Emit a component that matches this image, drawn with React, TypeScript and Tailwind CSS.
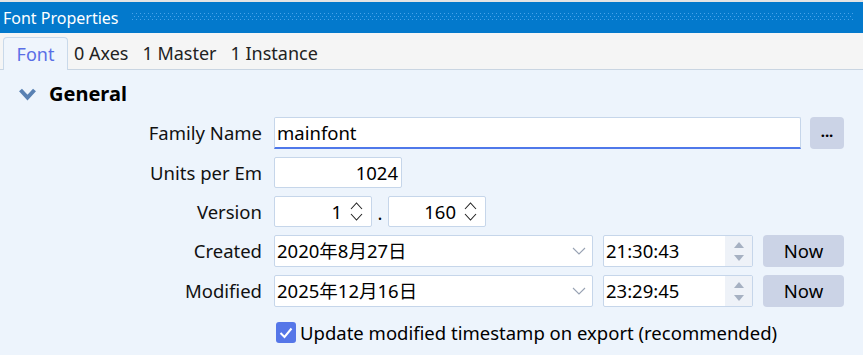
import React from "react";

const FONT = '"Noto Sans", "Noto Sans CJK SC", sans-serif';

function Dots() {
  return (
    <svg className="h-[9px] flex-1" preserveAspectRatio="none">
      <defs>
        <pattern id="dp" width="4" height="6" patternUnits="userSpaceOnUse">
          <rect x="0" y="0" width="1" height="1" fill="#4aa3ea" />
          <rect x="2" y="3" width="1" height="1" fill="#4aa3ea" />
        </pattern>
      </defs>
      <rect x="0" y="0" width="100%" height="8" fill="url(#dp)" />
    </svg>
  );
}

function UpDown() {
  return (
    <svg width="13" height="21" viewBox="0 0 13 21" className="shrink-0">
      <path d="M1 8 L6.5 2 L12 8" fill="none" stroke="#222" strokeWidth="1.1" />
      <path d="M1 13 L6.5 19 L12 13" fill="none" stroke="#222" strokeWidth="1.1" />
    </svg>
  );
}

function Label({ children }: { children: React.ReactNode }) {
  return (
    <div className="flex h-[31px] items-center justify-end text-[18.5px] text-[#111]">
      {children}
    </div>
  );
}

function DateRow({ date, time }: { date: string; time: string }) {
  return (
    <div className="flex h-[32px] items-stretch gap-[10px]">
      <div className="flex w-[319px] items-center justify-between rounded-[2px] border border-[#c6d6ea] bg-white pl-[2px] pr-[6px] text-[18.5px] text-black">
        <span>{date}</span>
        <svg width="14" height="8" viewBox="0 0 14 8">
          <path d="M1 1 L7 7 L13 1" fill="none" stroke="#98a2b3" strokeWidth="1.1" />
        </svg>
      </div>
      <div className="flex w-[150px] items-stretch rounded-[2px] border border-[#c6d6ea] bg-white text-[18.5px] text-black">
        <div className="flex flex-1 items-center pl-[2px]">{time}</div>
        <div className="flex w-[27px] flex-col items-center justify-center gap-[7px] bg-[#eef2f8]">
          <svg width="10" height="6" viewBox="0 0 10 6">
            <path d="M0 6 L5 0 L10 6 Z" fill="#a6b1c2" />
          </svg>
          <svg width="10" height="6" viewBox="0 0 10 6">
            <path d="M0 0 L5 6 L10 0 Z" fill="#a6b1c2" />
          </svg>
        </div>
      </div>
      <div className="flex w-[81px] items-center justify-center rounded-[4px] bg-[#cbd3e6] text-[18.5px] text-black">
        Now
      </div>
    </div>
  );
}

export default function App() {
  return (
    <div
      className="flex h-[355px] w-[863px] flex-col overflow-hidden bg-[#edf4fc]"
      style={{ fontFamily: FONT }}
    >
      <div className="h-[2px] bg-[#e4e4e4]" />
      <div className="flex h-[31px] items-center gap-[13px] bg-[#0379cc] pl-[3px] pr-[10px]">
        <span className="text-[16px] leading-none text-white">Font Properties</span>
        <Dots />
      </div>
      <div className="flex h-[37px] items-end border-b border-[#c9d5e2] bg-[#f5f5f5] pl-[3px]">
        <div className="-mb-px flex h-[33px] w-[65px] items-center justify-center rounded-t-[4px] border border-b-0 border-[#c9d9ea] bg-[#eff5fc] text-[18px] text-[#5a6fe6]">
          Font
        </div>
        <div className="flex h-[32px] items-center gap-[14px] pl-[6px] text-[18px] text-[#222]">
          <span>0 Axes</span>
          <span>1 Master</span>
          <span>1 Instance</span>
        </div>
      </div>
      <div className="flex flex-1 flex-col pr-[19px]">
        <div className="flex h-[47px] items-center gap-[13px] pl-[19px] pt-[1px]">
          <svg width="17" height="13" viewBox="0 0 17 13">
            <path d="M1.5 2 L8.5 9.5 L15.5 2" fill="none" stroke="#5981b3" strokeWidth="4" />
          </svg>
          <span className="text-[20px] font-bold text-black">General</span>
        </div>
        <div className="grid grid-cols-[262px_1fr] gap-x-[12px] gap-y-[8px]">
          <Label>Family Name</Label>
          <div className="flex h-[32px] items-stretch gap-[9px]">
            <div className="flex flex-1 items-center rounded-t-[2px] border border-b-2 border-[#c6d6ea] border-b-[#4f78ea] bg-white pl-[2px] text-[18.5px] text-black">
              mainfont
            </div>
            <div className="flex w-[34px] items-center justify-center rounded-[4px] bg-[#cbd3e6] pb-[4px] text-[15px] font-bold text-black">
              ...
            </div>
          </div>
          <Label>Units per Em</Label>
          <div className="flex h-[31px]">
            <div className="flex w-[128px] items-center justify-end rounded-[2px] border border-[#c6d6ea] bg-white pr-[3px] text-[18.5px] text-black">
              1024
            </div>
          </div>
          <Label>Version</Label>
          <div className="flex h-[31px] items-stretch">
            <div className="flex w-[98px] items-center justify-end gap-[8px] rounded-[2px] border border-[#c6d6ea] bg-white pr-[8px] text-[18.5px] text-black">
              <span>1</span>
              <UpDown />
            </div>
            <div className="flex w-[16px] items-end justify-center pb-[5px] text-[18.5px] leading-none">.</div>
            <div className="flex w-[98px] items-center justify-end gap-[8px] rounded-[2px] border border-[#c6d6ea] bg-white pr-[8px] text-[18.5px] text-black">
              <span>160</span>
              <UpDown />
            </div>
          </div>
          <Label>Created</Label>
          <DateRow date="2020年8月27日" time="21:30:43" />
          <Label>Modified</Label>
          <DateRow date="2025年12月16日" time="23:29:45" />
          <div />
          <div className="mt-[4px] flex items-center gap-[4px] pl-[2px]">
            <div className="flex h-[21px] w-[20px] items-center justify-center rounded-[3px] bg-[#5576e8]">
              <svg width="14" height="12" viewBox="0 0 14 12">
                <path d="M1.5 6 L5.5 10 L12.5 1.5" fill="none" stroke="white" strokeWidth="2" />
              </svg>
            </div>
            <span className="text-[18.5px] text-black">Update modified timestamp on export (recommended)</span>
          </div>
        </div>
      </div>
    </div>
  );
}
